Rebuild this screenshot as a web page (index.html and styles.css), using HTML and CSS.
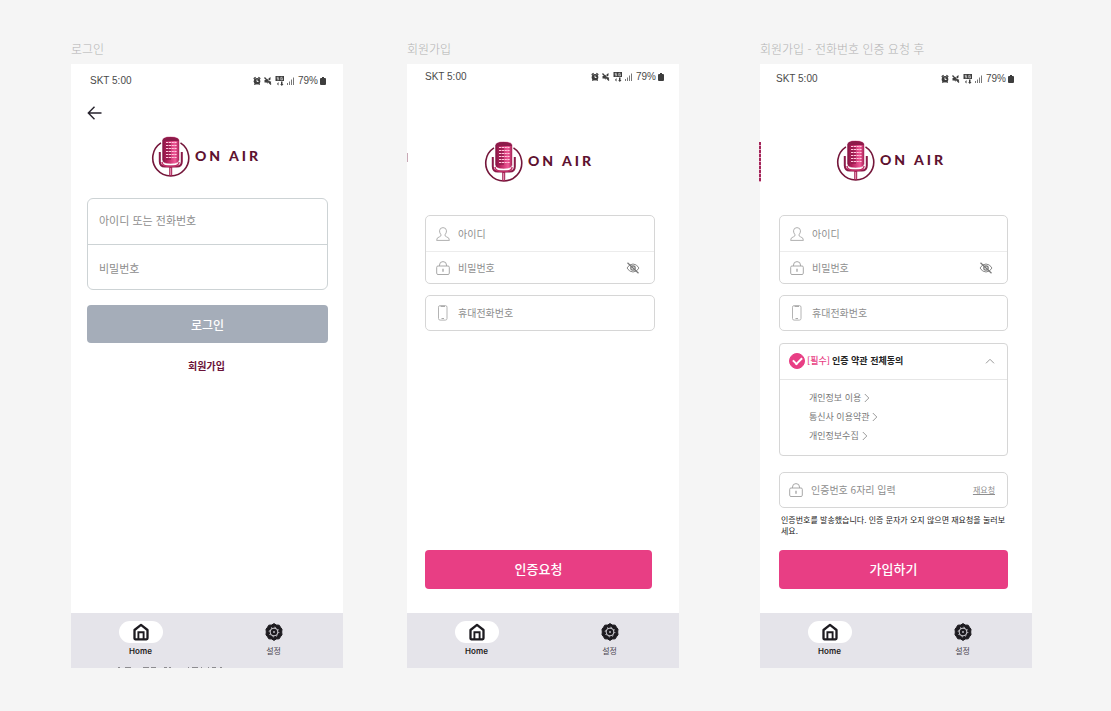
FILE: index.html
```html
<!DOCTYPE html>
<html lang="ko">
<head>
<meta charset="utf-8">
<meta name="viewport" content="width=device-width, initial-scale=1">
<title>ON AIR</title>
<link rel="stylesheet" href="styles.css">
</head>
<body>
<svg class="sprite" aria-hidden="true">
  <defs>
    <linearGradient id="mic-fill" x1="0" x2="1" y1="0" y2="0">
      <stop offset="0" stop-color="#7c123e"/>
      <stop offset=".3" stop-color="#b8225e"/>
      <stop offset=".75" stop-color="#f05a98"/>
      <stop offset="1" stop-color="#a01c50"/>
    </linearGradient>
    <symbol id="mic" viewBox="0 0 40 42">
      <path d="M10 6.800A18 18 0 1 0 29.500 6.800" fill="none" stroke="#74163a" stroke-width="1.600"/>
      <path d="M8.800 16v9.500q0 5 5 5h12q5 0 5-5V16" fill="none" stroke="#8a1a48" stroke-width="2"/>
      <path d="M11 26q0 4.500 8.500 4.500t8.500-4.500" fill="none" stroke="#c22c66" stroke-width="1.500"/>
      <path d="M19.700 31v9" stroke="#a32254" stroke-width="3"/>
      <path d="M19.700 32v7" stroke="#eda3c0" stroke-width="1"/>
      <path d="M11 5q0-4.500 8.700-4.500T28.500 5v18.500q0 4.500-8.800 4.500T11 23.500z" fill="url(#mic-fill)" stroke="#fff" stroke-width=".6"/>
      <path d="M11.500 5q0-4 8.200-4t8.300 4z" fill="#8d1b4a"/>
      <path d="M15 6.500h11M15 9.500h11M15 12.500h11M15 15.500h11M15 18.500h11M15 21.500h11" stroke="#ffc9dd" stroke-width="1" stroke-dasharray="2.200 .6"/>
      <path d="M15 8h5M15 11h5M15 14h5M15 17h5M15 20h5M15 23h5" stroke="#7a1440" stroke-width=".9"/>
    </symbol>
    <symbol id="status-icons" viewBox="0 0 42 12">
      <g fill="#3d3d3d">
        <circle cx="4" cy="6.300" r="3.300"/>
        <path d="M.300 3.200 2.200 1.800 3 2.800 1 4.300zM7.700 3.200 5.800 1.800 5 2.800 7 4.300zM1 8.500h1.600v1.300H1zM5.500 8.500H7v1.300H5.500z"/>
        <path d="M11.500 5h2l1.300-1.300v5L13.500 7.500h-2zM15.500 3.500 17.500 2v2.600l-2 1.400z"/>
        <path d="M22.500 1h8.500v5h-8.500z"/>
        <path d="m24 9 1.500-2v3.500zM28 6.500h1.500v2.500h1L28.800 11 27.200 9H28z"/>
      </g>
      <path d="M4 4.500v2h1.500" fill="none" stroke="#fff" stroke-width=".9"/>
      <path d="M11.500 2.500 18 9.500M16 6.500l2 .8" fill="none" stroke="#3d3d3d" stroke-width="1.300"/>
      <path d="M25.800 2.300h-1.600v1.200h1.500v1.300h-1.600M29.500 2.300h-1.700v2.500h1.700V3.600h-.8" fill="none" stroke="#fff" stroke-width=".6"/>
      <path d="M34.500 10V8M36.500 10V6.500M38.500 10V4.500M40.500 10V2.500" stroke="#777" stroke-width="1"/>
    </symbol>
    <symbol id="battery" viewBox="0 0 6 10">
      <path d="M2 1h2v1h1q1 0 1 1v5q0 1-1 1H1q-1 0-1-1V3q0-1 1-1h1z" fill="#3d3d3d"/>
    </symbol>
    <symbol id="user" viewBox="0 0 14 14">
      <path d="M5 7.800Q3.500 6 3.500 3.800 3.700.6 7 .6t3.500 3.200Q10.500 6 9 7.800q-.3 1.400 1.300 1.900 3.100.7 3.100 3.700H.6q0-3 3.100-3.700Q5.300 9.200 5 7.800z" fill="none" stroke="#b0b0b0"/>
    </symbol>
    <symbol id="lock" viewBox="0 0 14 14">
      <path d="M3.500 5V4q0-3.400 3.500-3.400T10.500 4v1M2 5h10q1.300 0 1.300 1.300v5.900q0 1.300-1.300 1.300H2q-1.300 0-1.300-1.300V6.300Q.7 5 2 5z" fill="none" stroke="#a8a8a8"/>
      <path d="M7 7.800v3" stroke="#999" stroke-width="1.200"/>
    </symbol>
    <symbol id="mobile" viewBox="0 0 14 16">
      <rect x="2.500" y=".6" width="8.500" height="14.500" rx="1.600" fill="none" stroke="#b4b4b4"/>
      <path d="M4.500 1.500h4.500M5.500 13.500h2.500" stroke="#aaa"/>
    </symbol>
    <symbol id="eye-off" viewBox="0 0 14 12">
      <path d="M1 6q2.300-4 6-4t6 4q-2.300 4-6 4T1 6z" fill="none" stroke="#8a8a8a"/>
      <circle cx="7" cy="6" r="2.200" fill="none" stroke="#777" stroke-width="1.200"/>
      <path d="M1.500.8 12.500 11.300" stroke="#777" stroke-width="1.200"/>
    </symbol>
    <symbol id="home" viewBox="0 0 16 18">
      <path d="M1.500 7 8 1.900 14.500 7v8.300q0 1-1 1h-11q-1 0-1-1z" fill="none" stroke="#1d1b20" stroke-width="2.300" stroke-linejoin="round"/>
      <path d="M5.400 16V9.300h5.200V16" fill="none" stroke="#1d1b20" stroke-width="1.900"/>
    </symbol>
    <symbol id="gear" viewBox="0 0 18 18">
      <path d="M9 .6 11.300 2 14.200 2.200 15.500 4.300 17 6.300 16.700 9 17 11.700 15.500 13.700 14.200 15.800 11.300 16 9 17.400 6.700 16 3.800 15.800 2.500 13.700 1 11.700 1.300 9 1 6.300 2.500 4.300 3.800 2.200 6.700 2z" fill="#1d1b20" stroke="#1d1b20" stroke-linejoin="round"/>
      <circle cx="9" cy="9" r="3.900" fill="none" stroke="#e5e4ea" stroke-width=".9"/>
      <circle cx="9" cy="9" r="4.800" fill="none" stroke="#e5e4ea" stroke-width="1" stroke-dasharray="1.200 2.570"/>
      <circle cx="9" cy="9" r="1" fill="#b5b4ba"/>
    </symbol>
    <symbol id="chevron" viewBox="0 0 6 10">
      <path d="m.8 1 4 4-4 4" fill="none" stroke="#9a9a9a"/>
    </symbol>
  </defs>
</svg>

<main class="board">
  <section class="artboard">
    <h2 class="artboard-title">로그인</h2>
    <div class="phone phone-login">
      <div class="status">
        <span>SKT 5:00</span>
        <span class="status-right"><svg class="status-icons"><use href="#status-icons"/></svg>79%<svg class="battery"><use href="#battery"/></svg></span>
      </div>
      <button class="back" type="button" aria-label="뒤로">
        <svg viewBox="0 0 16 16"><path d="M14.500 8H1.500M7.500 1.700 1.300 8l6.200 6.300" fill="none" stroke="#26222c" stroke-width="1.400"/></svg>
      </button>
      <div class="logo"><svg class="logo-mark"><use href="#mic"/></svg><span class="logo-text">ON AIR</span></div>
      <form class="form">
        <div class="group group-large">
          <label class="field"><input type="text" aria-label="아이디 또는 전화번호" placeholder="아이디 또는 전화번호"></label>
          <label class="field"><input type="password" aria-label="비밀번호" placeholder="비밀번호"></label>
        </div>
        <button class="login" type="button">로그인</button>
        <a class="join" href="#signup">회원가입</a>
      </form>
      <nav class="tabs">
        <a class="tab tab-active" href="#home"><span class="tab-icon"><svg class="home"><use href="#home"/></svg></span>Home</a>
        <a class="tab" href="#settings"><span class="tab-icon"><svg class="gear"><use href="#gear"/></svg></span>설정</a>
      </nav>
      <svg class="overflow-text" viewBox="0 0 106 2" aria-hidden="true"><path d="M0 1.500h2M7 1.500h6M25 1.500h6M33 1.500h5M46 1.500h3M51 1.500h2M70 1.500h1M74 1.500h6M83 1.500h1M90 1.500h1M94 1.500h4M102 1.500h2" stroke="#8d8c90"/></svg>
    </div>
  </section>

  <section class="artboard" id="signup">
    <h2 class="artboard-title">회원가입</h2>
    <div class="phone phone-signup">
      <span class="peek peek-ring"></span>
      <div class="status">
        <span>SKT 5:00</span>
        <span class="status-right"><svg class="status-icons"><use href="#status-icons"/></svg>79%<svg class="battery"><use href="#battery"/></svg></span>
      </div>
      <div class="logo"><svg class="logo-mark"><use href="#mic"/></svg><span class="logo-text">ON AIR</span></div>
      <form class="form">
        <div class="group">
          <label class="field"><svg class="icon"><use href="#user"/></svg><input type="text" aria-label="아이디" placeholder="아이디"></label>
          <label class="field"><svg class="icon"><use href="#lock"/></svg><input type="password" aria-label="비밀번호" placeholder="비밀번호"><button class="reveal" type="button" aria-label="비밀번호 표시"><svg><use href="#eye-off"/></svg></button></label>
        </div>
        <div class="group">
          <label class="field"><svg class="icon icon-tall"><use href="#mobile"/></svg><input type="tel" aria-label="휴대전화번호" placeholder="휴대전화번호"></label>
        </div>
        <button class="primary" type="button">인증요청</button>
      </form>
      <nav class="tabs">
        <a class="tab tab-active" href="#home"><span class="tab-icon"><svg class="home"><use href="#home"/></svg></span>Home</a>
        <a class="tab" href="#settings"><span class="tab-icon"><svg class="gear"><use href="#gear"/></svg></span>설정</a>
      </nav>
    </div>
  </section>

  <section class="artboard">
    <h2 class="artboard-title">회원가입 - 전화번호 인증 요청 후</h2>
    <div class="phone phone-verify">
      <span class="peek peek-mic"></span>
      <div class="status">
        <span>SKT 5:00</span>
        <span class="status-right"><svg class="status-icons"><use href="#status-icons"/></svg>79%<svg class="battery"><use href="#battery"/></svg></span>
      </div>
      <div class="logo"><svg class="logo-mark"><use href="#mic"/></svg><span class="logo-text">ON AIR</span></div>
      <form class="form">
        <div class="group">
          <label class="field"><svg class="icon"><use href="#user"/></svg><input type="text" aria-label="아이디" placeholder="아이디"></label>
          <label class="field"><svg class="icon"><use href="#lock"/></svg><input type="password" aria-label="비밀번호" placeholder="비밀번호"><button class="reveal" type="button" aria-label="비밀번호 표시"><svg><use href="#eye-off"/></svg></button></label>
        </div>
        <div class="group">
          <label class="field"><svg class="icon icon-tall"><use href="#mobile"/></svg><input type="tel" aria-label="휴대전화번호" placeholder="휴대전화번호"></label>
        </div>
        <div class="terms">
          <div class="terms-head">
            <label class="agree"><input type="checkbox" checked><span class="required">[필수]</span><span>인증 약관 전체동의</span></label>
            <button class="fold" type="button" aria-label="약관 접기"><svg viewBox="0 0 10 6"><path d="m1 5.300 4-4 4 4" fill="none" stroke="#999"/></svg></button>
          </div>
          <ul class="terms-list">
            <li><a href="#privacy">개인정보 이용<svg><use href="#chevron"/></svg></a></li>
            <li><a href="#carrier">통신사 이용약관<svg><use href="#chevron"/></svg></a></li>
            <li><a href="#collect">개인정보수집<svg><use href="#chevron"/></svg></a></li>
          </ul>
        </div>
        <div class="group group-code">
          <div class="field"><svg class="icon"><use href="#lock"/></svg><input type="text" aria-label="인증번호 6자리 입력" placeholder="인증번호 6자리 입력"><button class="resend" type="button">재요청</button></div>
        </div>
        <p class="message">인증번호를 발송했습니다. 인증 문자가 오지 않으면 재요청을 눌러보세요.</p>
        <button class="primary" type="button">가입하기</button>
      </form>
      <nav class="tabs">
        <a class="tab tab-active" href="#home"><span class="tab-icon"><svg class="home"><use href="#home"/></svg></span>Home</a>
        <a class="tab" href="#settings"><span class="tab-icon"><svg class="gear"><use href="#gear"/></svg></span>설정</a>
      </nav>
    </div>
  </section>
</main>
</body>
</html>
```

FILE: styles.css
```css
* {
  box-sizing: border-box;
}

body {
  margin: 0;
  background: #f5f5f5;
  color: #222;
  font-family: "Noto Sans CJK KR", sans-serif;
  font-size: 10px;
}

button,
input {
  font: inherit;
  color: inherit;
  margin: 0;
  padding: 0;
  border: 0;
  background: none;
}

button {
  cursor: pointer;
}

svg {
  display: block;
  flex: none;
}

.sprite {
  position: absolute;
  width: 0;
  height: 0;
}

.board {
  display: grid;
  grid-template-columns: 272fr 64fr 272fr 81fr 272fr;
  padding: 40px 79px 40px 71px;
}

.artboard:nth-child(2) {
  grid-column: 3;
}

.artboard:nth-child(3) {
  grid-column: 5;
}

.artboard-title {
  margin: 0 0 6px;
  color: #b3b3b3;
  font-size: 12px;
  font-weight: 300;
  line-height: 18px;
  white-space: nowrap;
}

.phone {
  position: relative;
  display: flex;
  flex-direction: column;
  min-height: 604px;
  background: #fff;
}

/* status bar */
.status {
  display: flex;
  justify-content: space-between;
  align-items: center;
  color: #4a4a4a;
  font-family: "Liberation Sans", Arial, sans-serif;
  font-size: 10px;
  line-height: 16px;
}

.status-right {
  display: flex;
  align-items: center;
}

.status-icons {
  width: 42px;
  height: 12px;
  margin-right: 3px;
}

.battery {
  width: 6px;
  height: 10px;
  margin-left: 2px;
}

.phone-login .status {
  padding: 9px 17px 0 19px;
}

.phone-signup .status {
  padding: 5px 15px 0 18px;
}

.phone-verify .status {
  padding: 7px 18px 0 16px;
}

.back {
  width: 16px;
  height: 16px;
  margin: 16px 0 0 16px;
}

/* logo */
.logo {
  display: flex;
  justify-content: center;
  align-items: center;
  gap: 4px;
}

.logo-mark {
  width: 40px;
  height: 42px;
}

.logo-text {
  color: #5e1230;
  font-family: Lato, sans-serif;
  font-size: 14px;
  font-weight: 900;
  letter-spacing: 3px;
  line-height: 20px;
  padding-bottom: 2px;
}

.phone-login .logo {
  margin-top: 15px;
  padding-right: 2px;
}

.phone-signup .logo {
  margin-top: 56px;
  padding-right: 8px;
}

.phone-verify .logo {
  margin-top: 53px;
  padding-right: 10px;
}

/* forms */
.form {
  display: flex;
  flex: 1;
  flex-direction: column;
}

.phone-login .form {
  padding: 20px 15px 0 16px;
}

.phone-signup .form {
  padding: 32px 24px 24px 18px;
}

.phone-verify .form {
  padding: 33px 24px 24px 19px;
}

.group {
  border: 1px solid #d6d6d6;
  border-radius: 5px;
}

.group + .group {
  margin-top: 11px;
}

.field {
  display: flex;
  align-items: center;
  height: 34px;
  padding: 0 14px 0 10px;
  gap: 8px;
}

.field:first-child:not(:last-child) {
  height: 35px;
}

.field + .field {
  height: 32px;
  border-top: 1px solid #ececec;
}

.field input {
  flex: 1;
  min-width: 0;
  height: 20px;
  padding-bottom: 1px;
  outline: 0;
}

.field input::placeholder {
  color: #8e8e8e;
  opacity: 1;
}

.group-large {
  border-color: #cdd3d5;
  border-radius: 6px;
  font-size: 11px;
}

.group-large .field,
.group-large .field:first-child:not(:last-child) {
  height: 45px;
  padding: 0 11px;
}

.group-large .field:first-child:not(:last-child) {
  padding-bottom: 3px;
}

.group-large .field + .field {
  padding-top: 2px;
  border-color: #cdd3d5;
}

.icon {
  width: 14px;
  height: 14px;
}

.icon-tall {
  height: 16px;
}

.reveal svg {
  width: 14px;
  height: 12px;
}

.login {
  height: 38px;
  margin-top: 15px;
  border-radius: 4px;
  background: #a5adb9;
  color: #fff;
  font-size: 12px;
  font-weight: 500;
}

.join {
  align-self: center;
  margin-top: 15px;
  padding-right: 2px;
  color: #6b1238;
  font-weight: 700;
  line-height: 16px;
  text-decoration: none;
}

.primary {
  height: 39px;
  margin-top: auto;
  padding-bottom: 2px;
  border-radius: 4px;
  background: #e83e84;
  color: #fff;
  font-size: 13px;
  font-weight: 500;
}

.phone-signup .primary {
  margin-right: 3px;
}

/* terms */
.terms {
  margin-top: 12px;
  border: 1px solid #d6d6d6;
  border-radius: 4px;
}

.terms-head {
  display: flex;
  justify-content: space-between;
  align-items: center;
  height: 36px;
  padding: 0 12px 2px 9px;
  border-bottom: 1px solid #e6e6e6;
}

.agree {
  display: flex;
  align-items: center;
  gap: 2px;
  font-size: 9px;
  font-weight: 700;
}

.agree input {
  display: grid;
  place-items: center;
  width: 16px;
  height: 16px;
  border: 1px solid #e83e84;
  border-radius: 50%;
  appearance: none;
}

.agree input:checked {
  background: #e83e84;
}

.agree input:checked::after {
  content: "";
  width: 7px;
  height: 4px;
  margin-bottom: 2px;
  border: solid #fff;
  border-width: 0 0 2px 2px;
  transform: rotate(-45deg);
}

.required {
  color: #e83e84;
  font-weight: 500;
}

.fold svg {
  width: 10px;
  height: 6px;
}

.terms-list {
  margin: 0;
  padding: 8px 29px 10px;
  list-style: none;
  color: #777;
  font-size: 9px;
  line-height: 19px;
}

.terms-list a {
  display: inline-flex;
  align-items: center;
  gap: 3px;
  color: inherit;
  text-decoration: none;
}

.terms-list svg {
  width: 6px;
  height: 10px;
}

.group-code {
  margin-top: 16px;
}

.resend {
  color: #8e8e8e;
  font-size: 8px;
  text-decoration: underline;
}

.group-code .field {
  padding: 0 12px 1px 9px;
}

.message {
  margin: 6px 0 0;
  padding-left: 2px;
  color: #222;
  font-size: 8px;
  line-height: 11px;
  word-break: break-all;
}

/* bottom navigation */
.tabs {
  display: flex;
  height: 55px;
  padding: 8px 3px 0;
  background: #e5e4ea;
}

.tab {
  display: flex;
  flex: 1;
  flex-direction: column;
  align-items: center;
  gap: 2px;
  color: #49454f;
  font-size: 8px;
  line-height: 12px;
  text-decoration: none;
}

.tab-active {
  color: #1d1b20;
  font-family: Inter, sans-serif;
  font-weight: 600;
}

.tab-icon {
  display: grid;
  place-items: center;
  width: 44px;
  height: 22px;
  border-radius: 11px;
}

.tab-active .tab-icon {
  background: #fff;
}

.home {
  width: 16px;
  height: 18px;
}

.gear {
  width: 18px;
  height: 18px;
}

/* layers that show past the artboard edges */
.overflow-text {
  position: absolute;
  left: 47px;
  bottom: 0;
  width: 106px;
  height: 2px;
}

.peek {
  position: absolute;
  left: -1px;
  width: 1px;
}

.peek-ring {
  left: 0;
  top: 89px;
  height: 9px;
  background: #c9a9b6;
}

.peek-mic {
  top: 78px;
  width: 2px;
  height: 40px;
  background: repeating-linear-gradient(#a3265a 0 3px, #e6a8c2 3px 4px);
}
```
